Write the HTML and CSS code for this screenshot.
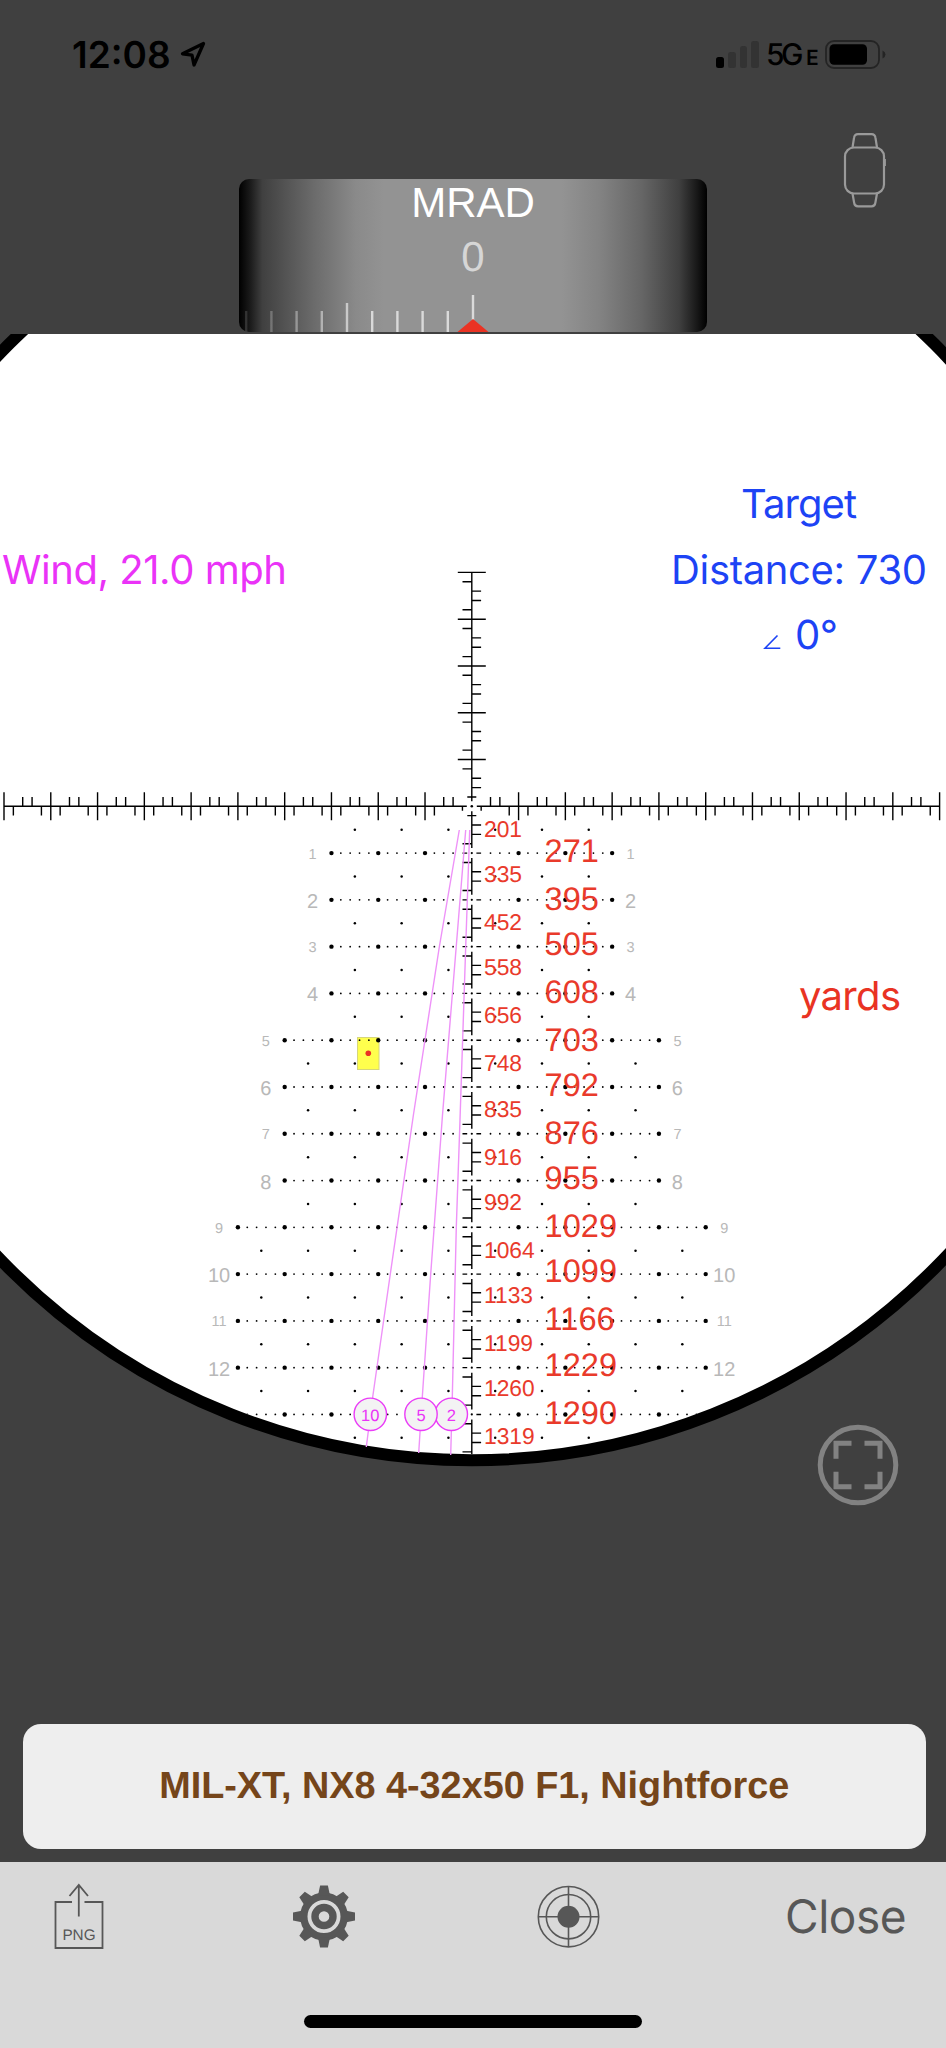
FILE: index.html
```html
<!DOCTYPE html>
<html lang="en">
<head>
    <meta charset="UTF-8">
    <meta name="viewport" content="width=device-width, initial-scale=1.0">
    <title>Reticle View</title>
    <link rel="stylesheet" href="styles.css">
</head>
<body>
    <div class="screen">
        <div class="status-bar">
            <div class="status-left">
                <span class="clock">12:08</span>
                <svg class="location" width="28" height="28" viewBox="0 0 28 28">
                    <path d="M24.5 2.5 L3.5 12.8 L13 14.2 L15 24 Z" fill="none" stroke="#000" stroke-width="3.3" stroke-linejoin="round"/>
                </svg>
            </div>
            <div class="status-right">
                <div class="signal">
                    <span class="bar on"></span>
                    <span class="bar b2"></span>
                    <span class="bar b3"></span>
                    <span class="bar b4"></span>
                </div>
                <div class="network">5G<span class="network-e">E</span></div>
                <svg class="battery" width="62" height="30" viewBox="0 0 62 30">
                    <rect x="1" y="1" width="53" height="27" rx="8" fill="none" stroke="#242424" stroke-width="1.8"/>
                    <rect x="4.5" y="4.2" width="37.5" height="20.5" rx="4.5" fill="#000"/>
                    <path d="M57.5 10.5 Q60.5 12 60.5 14.5 Q60.5 17 57.5 18.5 Z" fill="#242424"/>
                </svg>
            </div>
        </div>

        <div class="top-row">
            <div class="turret">
                <div class="turret-unit">MRAD</div>
                <div class="turret-value">0</div>
                <svg class="turret-scale" id="turretScale" width="468" height="40" viewBox="0 0 468 40"></svg>
            </div>
            <svg class="watch" width="46" height="78" viewBox="0 0 46 78" fill="none" stroke="#9a9a9a" stroke-width="2.2">
                <rect x="2" y="15.5" width="39" height="46" rx="9"/>
                <path d="M9.5 15.5 L11 6 Q11.5 2.2 15 2.2 H28.5 Q32 2.2 32.5 6 L34 15.5"/>
                <path d="M9.5 61.5 L11 70 Q11.5 74.3 15 74.3 H28.5 Q32 74.3 32.5 70 L34 61.5"/>
                <path d="M41.8 27 V34"/>
            </svg>
        </div>

        <svg class="scope" id="scope" width="946" height="1136" viewBox="0 334 946 1136"></svg>

        <div class="below-scope">
            <svg class="fullscreen" width="82" height="82" viewBox="0 0 82 82" fill="none" stroke="#828282" stroke-width="5">
                <circle cx="41" cy="41" r="37.8"/>
                <path d="M19 34.7 V19.3 H34.5 M47.5 19.3 H63 V34.7 M63 47.7 V62.7 H47.5 M34.5 62.7 H19 V47.7"/>
            </svg>
        </div>

        <div class="reticle-name">MIL-XT, NX8 4-32x50 F1, Nightforce</div>

        <div class="toolbar">
            <div class="tools">
                <svg class="tool" width="50" height="68" viewBox="0 0 50 68" fill="none" stroke="#575757" stroke-width="1.8">
                    <path d="M18 19 H1.5 V65 H48.5 V19 H30.5"/>
                    <path d="M24.8 33.5 V2.5 M15.5 13 L24.8 2 L34 13"/>
                    <text class="png-label" x="25" y="56.5">PNG</text>
                </svg>
                <svg class="tool" id="gear" width="62" height="68" viewBox="-31 -33.5 62 68"></svg>
                <svg class="tool" width="63" height="68" viewBox="-31.5 -33.7 63 68" fill="none" stroke="#575757" stroke-width="1.6">
                    <circle r="30.2"/>
                    <circle r="22.2"/>
                    <path d="M-30 0 H30 M0 -30 V30"/>
                    <circle r="11" fill="#575757" stroke="none"/>
                </svg>
                <span class="close">Close</span>
            </div>
            <div class="home-bar"></div>
        </div>
    </div>

    <script>
        // reticle centre and size of one mil in pixels
        const CX = 471.8;
        const CY = 806.3;
        const MIL = 46.78;
        const R = 654;

        function line(x1, y1, x2, y2) {
            return `M${x1.toFixed(2)} ${y1.toFixed(2)}L${x2.toFixed(2)} ${y2.toFixed(2)}`;
        }

        function dot(x, y, r) {
            return `<circle cx="${(CX + x * MIL).toFixed(2)}" cy="${(CY + y * MIL).toFixed(2)}" r="${r}"/>`;
        }

        function rowExtent(n) {
            if (n <= 4) return 3;
            if (n <= 8) return 4;
            return 5;
        }

        // short ticks at .2 and .8 go one way, .4 and .6 the other
        function drawCross() {
            let d = "";
            [-1, 1].forEach(s => {
                d += line(CX + s * 5, CY, CX + s * 10 * MIL, CY);
                for (let i = 1; i <= 50; i++) {
                    const x = CX + s * i * MIL / 5;
                    if (i % 5 === 0) d += line(x, CY - 14, x, CY + 14);
                    else if (i === 1) d += line(x, CY, x, CY + 4.5);
                    else if (i % 5 === 1 || i % 5 === 4) d += line(x, CY, x, CY + 9.3);
                    else d += line(x, CY, x, CY - 9.3);
                }
            });
            d += line(CX, CY - 5, CX, CY - 5 * MIL);
            for (let i = 1; i <= 25; i++) {
                const y = CY - i * MIL / 5;
                if (i % 5 === 0) d += line(CX - 14, y, CX + 14, y);
                else if (i === 1) d += line(CX - 4.5, y, CX + 4.5, y);
                else if (i % 5 === 1 || i % 5 === 4) d += line(CX - 9.3, y, CX, y);
                else d += line(CX, y, CX + 9.3, y);
            }
            for (let i = 1; i <= 69; i++) {
                const y = CY + i * MIL / 5;
                if (i % 5 === 0) d += line(CX - 9.3, y, CX - 4.6, y) + line(CX + 4.6, y, CX + 9.3, y);
                else if (i === 1) d += line(CX - 4.5, y, CX + 4.5, y);
                else if (i % 5 === 1 || i % 5 === 4) d += line(CX - 9.3, y, CX, y);
                else d += line(CX, y, CX + 9.3, y);
            }
            for (let n = 0; n < 14; n++) {
                d += line(CX, CY + n * MIL + 5, CX, CY + (n + 1) * MIL - 5);
            }
            return `<path d="${d}" stroke="#000" stroke-width="1.4" fill="none"/>`;
        }

        function drawDots() {
            let out = dot(0, 0, 1.3);
            for (let n = 0; n <= 13; n++) {
                const ext = rowExtent(n);
                if (n > 0) {
                    out += dot(0, n, 1.1);
                    for (let i = 2; i <= ext * 5; i++) {
                        const r = i % 5 === 0 ? 2.2 : 0.9;
                        out += dot(i / 5, n, r) + dot(-i / 5, n, r);
                    }
                }
                for (let i = 0.5; i < ext; i++) {
                    out += dot(i, n + 0.5, 1.25) + dot(-i, n + 0.5, 1.25);
                }
            }
            return out;
        }

        function drawRowLabels() {
            let out = "";
            for (let n = 1; n <= 12; n++) {
                const even = n % 2 === 0;
                const x = rowExtent(n) * MIL + 18.5;
                const y = CY + n * MIL + (even ? 8 : 5.6);
                const cls = even ? "mil even" : "mil odd";
                out += `<text class="${cls}" x="${CX - x - 0.4}" y="${y}">${n}</text>`;
                out += `<text class="${cls}" x="${CX + x}" y="${y}">${n}</text>`;
            }
            return out;
        }

        const halfMil = [
            [201, 836.7], [335, 882], [452, 929.7], [558, 975], [656, 1023], [748, 1071.3], [835, 1116.7],
            [916, 1164.7], [992, 1209.7], [1064, 1257.7], [1133, 1302.7], [1199, 1351], [1260, 1396.3], [1319, 1444]
        ];
        const fullMil = [
            [271, 861.7], [395, 909.7], [505, 954.7], [608, 1002.7], [703, 1051], [792, 1096], [876, 1144],
            [955, 1189.3], [1029, 1237.3], [1099, 1282.3], [1166, 1330.3], [1229, 1376], [1290, 1423.7]
        ];
        const winds = [
            { mph: 10, x: 370.3, pts: "459.3,830 439.3,947 413.4,1115 390.3,1274 372.7,1397 366.3,1447" },
            { mph: 2, x: 451.3, pts: "469.7,830 465.7,947 460,1120 456.3,1227 452.3,1397 450.7,1455" },
            { mph: 5, x: 421, pts: "465.7,830 456.2,947 442.5,1115 430.7,1274 422.3,1397 418.7,1453" }
        ];

        function drawScope() {
            let out = `<defs><clipPath id="lens"><circle cx="${CX}" cy="${CY}" r="648"/></clipPath></defs>`;
            out += `<circle cx="${CX}" cy="${CY}" r="${R}" fill="#fff" stroke="#000" stroke-width="12"/>`;
            out += `<g clip-path="url(#lens)">`;
            out += `<rect x="357.5" y="1037.5" width="21.5" height="32" fill="#ffff4d" stroke="#d6d67a" stroke-width="1"/>`;
            out += drawCross() + drawDots() + drawRowLabels() + `</g>`;
            out += `<circle cx="368.3" cy="1053.3" r="2.8" fill="#ea3323"/>`;
            winds.forEach(w => out += `<polyline class="wind-line" points="${w.pts}"/>`);
            winds.forEach(w => {
                out += `<circle class="wind-circle" cx="${w.x}" cy="1414.3" r="16.2"/>`;
                out += `<text class="wind-label" x="${w.x}" y="1420.6">${w.mph}</text>`;
            });
            halfMil.forEach(h => out += `<text class="range half" x="484" y="${h[1]}">${h[0]}</text>`);
            fullMil.forEach(f => out += `<text class="range full" x="544.6" y="${f[1]}">${f[0]}</text>`);
            out += `<text class="info wind" x="2" y="583.5" textLength="285">Wind, 21.0 mph</text>`;
            out += `<text class="info target" x="741" y="518" textLength="116">Target</text>`;
            out += `<text class="info target" x="671" y="583.5" textLength="256">Distance: 730</text>`;
            out += `<path d="M777.5 635.5 L765 648.2 H780.3" fill="none" stroke="#1d43f5" stroke-width="1.6"/>`;
            out += `<text class="info target" x="795" y="649.3" textLength="43">0°</text>`;
            out += `<text class="info units" x="799" y="1009.5" textLength="102">yards</text>`;
            document.getElementById("scope").innerHTML = out;
        }

        function drawTurretScale() {
            let out = "";
            for (let i = 0; i <= 9; i++) {
                const x = 234 - i * 25.2;
                const top = i === 0 ? 3 : i === 5 ? 11 : 19;
                const fade = i < 5 ? 0.75 : Math.max(0.12, 0.75 - (i - 4) * 0.12);
                out += `<rect x="${x - 1.2}" y="${top}" width="2.4" height="${40 - top}" fill="#f2f2f2" opacity="${fade}"/>`;
            }
            out += `<path d="M218.5 40 L234 27 L249.5 40 Z" fill="#ea3323"/>`;
            document.getElementById("turretScale").innerHTML = out;
        }

        function drawGear() {
            let out = `<circle r="20.2" fill="none" stroke="#575757" stroke-width="7.4"/>`;
            for (let i = 0; i < 8; i++) {
                out += `<path d="M-6 -21 L-3.9 -31 H3.9 L6 -21 Z" fill="#575757" transform="rotate(${i * 45})"/>`;
            }
            out += `<circle r="9" fill="none" stroke="#575757" stroke-width="7.4"/>`;
            document.getElementById("gear").innerHTML = out;
        }

        drawTurretScale();
        drawScope();
        drawGear();
    </script>
</body>
</html>
```
FILE: styles.css
```css
body { margin: 0; background: #404040; font-family: Inter, "Liberation Sans", sans-serif; text-rendering: geometricPrecision; }
.screen { width: 946px; height: 2048px; display: flex; flex-direction: column; overflow: hidden; background: #404040; }
svg { display: block; }

.status-bar { height: 109px; box-sizing: border-box; padding: 0 59px 0 72px; display: flex; justify-content: space-between; align-items: center; }
.status-left { display: flex; align-items: center; gap: 8px; }
.clock { font-size: 37px; font-weight: 600; color: #000; }
.status-right { display: flex; align-items: center; }
.signal { display: flex; align-items: flex-end; gap: 4px; height: 27px; margin-right: 7px; }
.bar { width: 7.7px; border-radius: 2.5px; background: #333; }
.bar.on { height: 11px; background: #000; }
.bar.b2 { height: 16px; }
.bar.b3 { height: 22px; }
.bar.b4 { height: 27px; }
.network { font-size: 30px; font-weight: 500; color: #000; letter-spacing: -3.5px; width: 59px; white-space: nowrap; }
.network-e { font-size: 21px; font-weight: 600; margin-left: 6px; }

.top-row { height: 225px; display: grid; grid-template-columns: 239px 468px 239px; }
.turret { grid-column: 2; align-self: end; height: 153px; margin-bottom: 2px; border-radius: 10px; overflow: hidden; text-align: center; background: linear-gradient(to right, #000 0, #1c1c1c 2.5%, #404040 5%, #6b6b6b 16%, #8a8a8a 25%, #939393 31%, #939393 69%, #838383 77%, #666 86%, #404040 94%, #1c1c1c 97.5%, #000 100%); }
.turret-unit { font-family: "Liberation Sans", sans-serif; font-size: 42px; line-height: 48px; color: #fff; }
.turret-value { font-family: "Liberation Sans", sans-serif; font-size: 42px; line-height: 48px; margin-top: 6px; height: 59px; color: #d6d6d6; }
.watch { grid-column: 3; margin: 23px 0 0 135.5px; }

.scope { flex: none; }
.mil { font-family: "Liberation Sans", sans-serif; fill: #b8b8b8; text-anchor: middle; }
.mil.even { font-size: 20px; }
.mil.odd { font-size: 14.5px; }
.range { font-family: "Liberation Sans", sans-serif; fill: #e93a2b; }
.range.half { font-size: 22.8px; }
.range.full { font-size: 32.6px; }
.wind-line { fill: none; stroke: #ee92f8; stroke-width: 1.4; }
.wind-circle { fill: #f3f3f3; stroke: #ea3df7; stroke-width: 1.4; }
.wind-label { font-family: "Liberation Sans", sans-serif; font-size: 16.5px; fill: #ea33f7; text-anchor: middle; }
.info { font-size: 40px; }
.wind { fill: #ea33f7; }
.target { fill: #1d43f5; }
.units { fill: #e93323; }

.below-scope { height: 254px; display: flex; justify-content: flex-end; padding-right: 47.5px; }
.fullscreen { margin-top: -46px; }

.reticle-name { flex: none; height: 125px; margin: 0 20px 0 22.5px; border-radius: 18px; background: #eee; color: #75451a; font-family: "Liberation Sans", sans-serif; font-size: 37.8px; font-weight: bold; line-height: 125px; text-align: center; }

.toolbar { flex: 1; margin-top: 13px; background: #d9d9d9; display: flex; flex-direction: column; align-items: center; }
.tools { align-self: stretch; height: 110px; padding: 0 40px 0 53.5px; display: grid; grid-template-columns: 239px 244px 1fr auto; align-items: center; }
.close { font-size: 46px; line-height: 54px; color: #575757; letter-spacing: -0.5px; }
.png-label { font-family: "Liberation Sans", sans-serif; font-size: 15.3px; fill: #575757; stroke: none; text-anchor: middle; }
.home-bar { width: 338px; height: 13px; margin-top: 43px; border-radius: 7px; background: #000; }
```
